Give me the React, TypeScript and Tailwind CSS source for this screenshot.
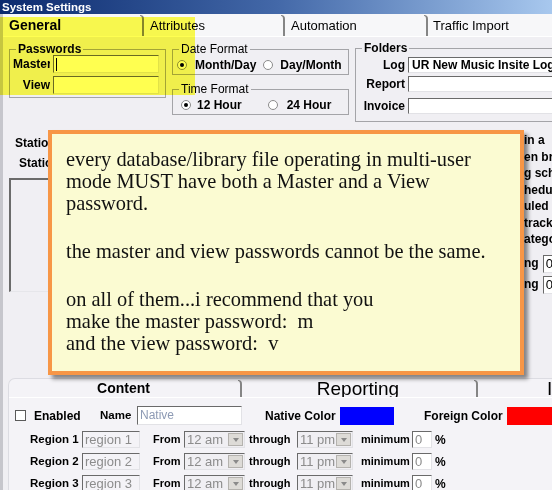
import React from "react";

// sunken 3D edge used by every text box / combo
const sunken =
  "border border-t-[#6a6a6a] border-l-[#6a6a6a] border-r-[#e2e2e6] border-b-[#e2e2e6]";

function Radio({ on }: { on?: boolean }) {
  return (
    <span className="flex h-[10px] w-[10px] shrink-0 items-center justify-center rounded-full border border-[#8b8b8b] bg-white">
      {on && <span className="block h-[4px] w-[4px] rounded-full bg-black" />}
    </span>
  );
}

function TabSep({ h = "h-[21px]" }: { h?: string }) {
  return <span className={`${h} w-[4px] shrink-0 self-end rounded-tr-[5px] border-t border-r-2 border-[#858585]`} />;
}

function Combo({ value, w }: { value: string; w: string }) {
  return (
    <div className={`flex h-[17px] shrink-0 ${w} items-stretch bg-[#f0eff3] ${sunken}`}>
      <span className="flex-1 pl-[2px] text-[13px] font-normal leading-[15px] text-[#8c8c8c]">{value}</span>
      <span className="m-px flex w-[15px] items-center justify-center border border-[#b4b2ae] bg-[#dddbd7]">
        <span className="h-0 w-0 border-t-[4px] border-r-[3px] border-l-[3px] border-r-transparent border-l-transparent border-t-[#8a8a8a]" />
      </span>
    </div>
  );
}

const regions = [1, 2, 3];
const rightLabels = ["in a", "en bre", "g sch", "hedu", "uled b", "track", "atego"];

export default function App() {
  return (
    <div className="relative h-[490px] w-[552px] overflow-hidden bg-[#f0eff3] font-['Liberation_Sans',Arial,sans-serif] text-black">
      {/* title bar */}
      <div className="h-[14px] bg-gradient-to-r from-[#0c2a6e] via-[#4368a8] to-[#a8c8ee] pl-[2px] text-[11.5px] font-bold leading-[14px] text-white">
        System Settings
      </div>

      <div className="flex h-[476px] flex-col border-l-[3px] border-[#c6c6cc]">
        {/* top tabs */}
        <div className="flex h-[23px] shrink-0 items-stretch border-b border-white bg-[#f7f7f9]">
          <div className="w-[137px] shrink-0 pl-[6px] text-[14px] font-bold leading-[23px]">General</div>
          <TabSep />
          <div className="w-[137px] shrink-0 pl-[6px] text-[13px] leading-[24px]">Attributes</div>
          <TabSep />
          <div className="w-[139px] shrink-0 pl-[6px] text-[13px] leading-[24px]">Automation</div>
          <TabSep />
          <div className="flex-1 pl-[5px] text-[13px] leading-[24px]">Traffic Import</div>
        </div>

        {/* top groups */}
        <div className="flex h-[85px] shrink-0 items-start overflow-hidden">
          <fieldset className="ml-[6px] mt-[6px] h-[55px] w-[157px] shrink-0 border border-[#a4a4a8]">
            <legend className="ml-[6px] px-[2px] text-[12px] font-bold leading-[12px]">Passwords</legend>
            <div className="flex h-[18px] items-center">
              <span className="w-[40px] shrink-0 overflow-hidden whitespace-nowrap pl-[3px] text-[12px] font-bold">Master</span>
              <div className={`ml-[3px] flex h-[18px] w-[106px] shrink-0 items-center bg-white ${sunken}`}>
                <span className="ml-[2px] h-[13px] w-px bg-black" />
              </div>
            </div>
            <div className="mt-[3px] flex h-[18px] items-center">
              <span className="w-[40px] shrink-0 text-right text-[12px] font-bold">View</span>
              <div className={`ml-[3px] h-[18px] w-[106px] shrink-0 bg-white ${sunken}`} />
            </div>
          </fieldset>

          <div className="ml-[6px] flex w-[177px] shrink-0 flex-col">
            <fieldset className="mt-[6px] h-[32px] border border-[#a4a4a8]">
              <legend className="ml-[6px] px-[2px] text-[12px] leading-[12px]">Date Format</legend>
              <div className="mt-[3px] flex h-[14px] items-center whitespace-nowrap pl-[4px] text-[12px] font-bold">
                <Radio on />
                <span className="ml-[8px]">Month/Day</span>
                <span className="ml-[7px]"><Radio /></span>
                <span className="ml-[7px]">Day/Month</span>
              </div>
            </fieldset>
            <fieldset className="mt-[8px] h-[32px] border border-[#a4a4a8]">
              <legend className="ml-[6px] px-[2px] text-[12px] leading-[12px]">Time Format</legend>
              <div className="mt-[3px] flex h-[14px] items-center whitespace-nowrap pl-[8px] text-[12px] font-bold">
                <Radio on />
                <span className="ml-[6px]">12 Hour</span>
                <span className="ml-[26px]"><Radio /></span>
                <span className="ml-[9px]">24 Hour</span>
              </div>
            </fieldset>
          </div>

          <fieldset className="ml-[6px] mt-[5px] h-[80px] w-[210px] shrink-0 border border-[#a4a4a8]">
            <legend className="ml-[6px] px-[2px] text-[12px] font-bold leading-[12px]">Folders</legend>
            <div className="mt-[3px] flex h-[16px] items-center">
              <span className="w-[49px] shrink-0 text-right text-[12px] font-bold">Log</span>
              <div className={`ml-[3px] h-[16px] flex-1 overflow-hidden whitespace-nowrap bg-white pl-[3px] text-[12px] font-bold leading-[14px] ${sunken}`}>
                UR New Music Insite Log
              </div>
            </div>
            <div className="mt-[3px] flex h-[16px] items-center">
              <span className="w-[49px] shrink-0 text-right text-[12px] font-bold">Report</span>
              <div className={`ml-[3px] h-[16px] flex-1 bg-white ${sunken}`} />
            </div>
            <div className="mt-[6px] flex h-[16px] items-center">
              <span className="w-[49px] shrink-0 text-right text-[12px] font-bold">Invoice</span>
              <div className={`ml-[3px] h-[16px] flex-1 bg-white ${sunken}`} />
            </div>
          </fieldset>
        </div>

        {/* middle, mostly under the note */}
        <div className="flex h-[254px] shrink-0">
          <div className="flex flex-1 flex-col text-[12px] font-bold leading-[14px]">
            <span className="ml-[12px] mt-[14px] whitespace-nowrap">Station Name</span>
            <span className="ml-[16px] mt-[6px] whitespace-nowrap">Station ID</span>
            <div className="ml-[6px] mt-[8px] h-[114px] w-[200px] border-t-2 border-l-2 border-r border-b border-t-[#6b6b6b] border-l-[#6b6b6b] border-r-[#e6e6ea] border-b-[#e6e6ea]" />
          </div>
          <div className="w-[28px] shrink-0 overflow-hidden whitespace-nowrap pt-[10px] text-[12px] font-bold leading-[16.5px]">
            {rightLabels.map((t) => (
              <div key={t}>{t}</div>
            ))}
            {[0, 1].map((i) => (
              <div key={i} className={`flex h-[18px] items-center ${i === 0 ? "mt-[7px]" : "mt-[3px]"}`}>
                <span>ng</span>
                <span className={`ml-[4px] h-[18px] w-[20px] shrink-0 bg-white pl-[2px] text-[13px] font-normal leading-[16px] ${sunken}`}>0</span>
              </div>
            ))}
          </div>
        </div>

        {/* bottom tab page */}
        <div className="ml-[5px] mt-[2px] flex-1 overflow-hidden rounded-tl-[7px] border-t border-l border-[#dcdce2] bg-[#f4f3f7]">
          <div className="flex h-[19px] items-stretch overflow-hidden border-b border-white whitespace-nowrap">
            <div className="w-[229px] shrink-0 text-center text-[14px] font-bold leading-[19px]">Content</div>
            <TabSep h="h-[17px]" />
            <div className="w-[232px] shrink-0 overflow-hidden text-center text-[19px] leading-[19px]">Reporting</div>
            <TabSep h="h-[17px]" />
            <div className="flex-1 overflow-hidden pl-[69px] text-[19px] leading-[19px]">Invoice</div>
          </div>

          <div className="mt-[8px] flex h-[19px] items-center whitespace-nowrap font-bold">
            <span className="ml-[6px] h-[11px] w-[11px] shrink-0 border border-[#5a5a5a] bg-white" />
            <span className="ml-[8px] w-[47px] shrink-0 text-[12px]">Enabled</span>
            <span className="ml-[19px] w-[33px] shrink-0 text-[11.5px]">Name</span>
            <div className={`ml-[4px] h-[19px] w-[105px] shrink-0 bg-white pl-[2px] text-[12px] font-normal leading-[17px] text-[#8d9ab4] ${sunken}`}>
              Native
            </div>
            <span className="ml-[23px] w-[71px] shrink-0 text-[12px]">Native Color</span>
            <span className="ml-[4px] h-[18px] w-[54px] shrink-0 bg-[#0000ff]" />
            <span className="ml-[30px] w-[79px] shrink-0 text-[12px]">Foreign Color</span>
            <span className="ml-[4px] h-[18px] w-[60px] shrink-0 bg-[#ff0000]" />
          </div>

          {regions.map((n) => (
            <div
              key={n}
              className={`flex h-[17px] items-center whitespace-nowrap font-bold ${n === 1 ? "mt-[6px]" : "mt-[5px]"}`}
            >
              <span className="ml-[21px] w-[52px] shrink-0 text-[11.5px]">Region {n}</span>
              <div className={`h-[17px] w-[58px] shrink-0 bg-[#f4f3f7] pl-[2px] text-[13px] font-normal leading-[15px] text-[#8c8c8c] ${sunken}`}>
                region {n}
              </div>
              <span className="ml-[13px] w-[31px] shrink-0 text-[11px]">From</span>
              <Combo value="12 am" w="w-[61px]" />
              <span className="ml-[4px] w-[46px] shrink-0 text-[11px]">through</span>
              <span className="ml-[2px] shrink-0"><Combo value="11 pm" w="w-[56px]" /></span>
              <span className="ml-[8px] w-[49px] shrink-0 text-[11px]">minimum</span>
              <div className={`ml-[2px] h-[17px] w-[20px] shrink-0 bg-white pl-[2px] text-[13px] font-normal leading-[15px] text-[#8c8c8c] ${sunken}`}>
                0
              </div>
              <span className="ml-[3px] shrink-0 text-[12px]">%</span>
            </div>
          ))}
        </div>
      </div>

      {/* highlighter mark over the password group */}
      <div className="pointer-events-none absolute left-0 top-[17px] h-[78px] w-[195px] bg-[#ffff50] mix-blend-multiply" />

      {/* note callout */}
      <div className="absolute left-[48px] top-[130px] h-[245px] w-[476px] overflow-hidden whitespace-nowrap border-4 border-[#f79646] bg-[#fbfbd2] pl-[14px] pt-[14px] font-['Liberation_Serif','Times_New_Roman',serif] text-[20.4px] leading-[22px] text-[#111] shadow-[4px_4px_4px_rgba(0,0,0,0.45)]">
        <p>
          every database/library file operating in multi-user
          <br />
          mode MUST have both a Master and a View
          <br />
          password.
        </p>
        <p className="mt-[26px]">the master and view passwords cannot be the same.</p>
        <p className="mt-[26px] whitespace-pre">
          on all of them...i recommend that you
          <br />
          {"make the master password:  m"}
          <br />
          {"and the view password:  v"}
        </p>
      </div>
    </div>
  );
}
